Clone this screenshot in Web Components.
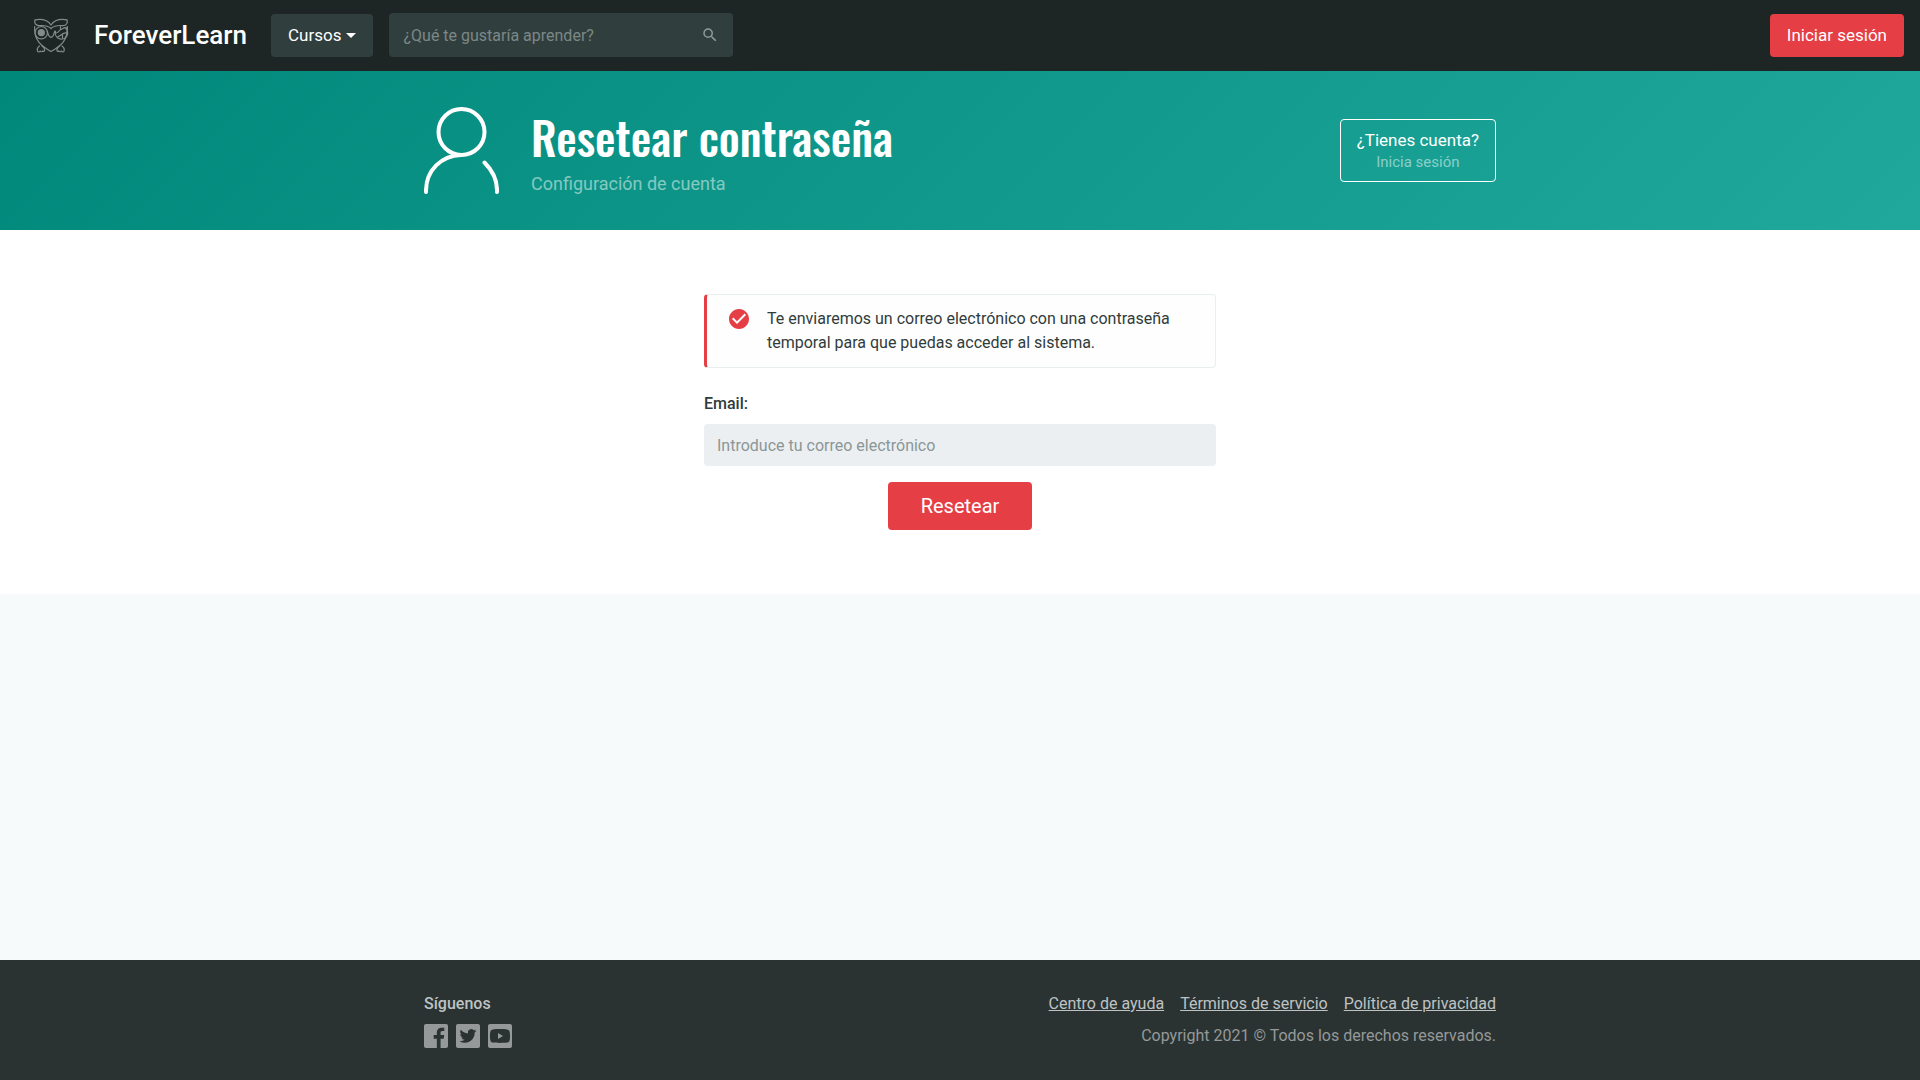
<!DOCTYPE html>
<html lang="es">
<head>
<meta charset="utf-8">
<meta name="viewport" content="width=device-width, initial-scale=1">
<title>ForeverLearn - Resetear contraseña</title>
<style>
  body { margin: 0; font: 16px/24px Roboto, "Liberation Sans", sans-serif; color: #303c3b; background: #f6fafb; }
</style>
</head>
<body>
<fl-page>
  <fl-header slot="header"></fl-header>
  <fl-hero>
    <span slot="title">Resetear contraseña</span>
    <span slot="subtitle">Configuración de cuenta</span>
  </fl-hero>
  <fl-reset-form>
    <fl-notice>Te enviaremos un correo electrónico con una contraseña temporal para que puedas acceder al sistema.</fl-notice>
  </fl-reset-form>
  <fl-footer slot="footer"></fl-footer>
</fl-page>
<script>
const define = (name, html) => customElements.define(name, class extends HTMLElement {
  constructor() {
    super();
    this.attachShadow({ mode: 'open' }).innerHTML =
      '<style>*{box-sizing:border-box}h1,p{margin:0}a{color:inherit;text-decoration:none}button,input{font:inherit;margin:0;border:0}svg{display:block;flex:none}</style>' + html;
  }
});

define('fl-page', `
<style>
  :host { display: flex; flex-direction: column; min-height: 100vh; }
  main { flex: 1; }
</style>
<slot name="header"></slot>
<main><slot></slot></main>
<slot name="footer"></slot>`);

define('fl-header', `
<style>
  :host { display: block; background: #1e2625; color: #fff; }
  header { display: flex; align-items: center; min-height: 71px; padding: 13px 16px 14px 32px; }
  .brand { display: flex; align-items: center; gap: 24px; margin-right: 24px; font-size: 26px; line-height: 32px; font-weight: 500; }
  .menu, .login { height: 43px; border-radius: 4px; font-size: 17px; line-height: 24px; color: #fff; }
  .menu { display: flex; align-items: center; gap: 5px; padding: 0 17px; margin-right: 16px; background: #303f3e; }
  .search { display: flex; align-items: center; width: 344px; height: 44px; padding-right: 14px; border-radius: 4px; background: #303f3e; }
  .search input { flex: 1; min-width: 0; height: 44px; padding: 0 14px; background: none; color: #fff; outline: 0; }
  .search input::placeholder { color: #7c8887; opacity: 1; }
  .search button { padding: 0; background: none; color: #8f9998; }
  .login { display: flex; align-items: center; margin-left: auto; padding: 0 17px; background: #e53e45; }
</style>
<header>
  <a class="brand" href="#">
    <svg width="38" height="38" viewBox="0 0 38 38" fill="none" stroke="#858a8a" stroke-width="1.2" stroke-linejoin="round" stroke-linecap="round" aria-hidden="true">
      <path d="M3 3.800C8 3 15 2.800 19 9 23 2.800 30 3 35 3.800 36 6.500 34.500 9.600 31 9.600 26 9.200 22 9.600 19 12.500 16 9.600 12 9.200 7 9.600 3.500 9.600 2 7 3 3.800Z"/>
      <circle cx="9.300" cy="16.700" r="6.200"/><circle cx="9.300" cy="16.700" r="3" fill="#858a8a"/>
      <path d="M15.200 15c1 4 2.400 6.300 3.800 6.300s2.800-2.300 3.800-6.300"/>
      <path d="M33 11.800a6.200 6.200 0 1 1-9.500 3.500M35 11v8c-.5 1.500-1.200 2.500-2.300 3.300M24 17c3 0 2.500-3 5-3.500s2.500-2.500 4.500-1.700M26 20.500c3 0 3.500-4 8.500-3.500M28.500 10.500v3M30.500 18v4"/>
      <path d="M2.600 10.500C2 25 9.500 30 19 35.600 28.500 30 36 25 35.400 10.500"/>
      <path d="M7.500 30c-1.700 1.300-2.600 3.700-1.900 5.300.8 1.100 2 .4 2.500-.3.600 1 2 1 2.600 0 .8.800 2.100.3 1.900-1.300-.3-1.800-1.500-3-2.600-3.700M30 30c1.700 1.300 2.600 3.700 1.900 5.300-.8 1.100-2 .4-2.500-.3-.6 1-2 1-2.600 0-.8.800-2.100.3-1.900-1.300.3-1.800 1.500-3 2.600-3.700"/>
    </svg>
    <span>ForeverLearn</span>
  </a>
  <button class="menu" type="button">Cursos
    <svg width="10" height="5" viewBox="0 0 10 5" aria-hidden="true"><path d="M0 0h10L5 5z" fill="currentColor"/></svg>
  </button>
  <form class="search" role="search">
    <input type="search" placeholder="¿Qué te gustaría aprender?" aria-label="Buscar cursos">
    <button type="button" aria-label="Buscar">
      <svg width="18" height="18" viewBox="0 0 24 24" fill="currentColor"><path d="M15.500 14h-.79l-.28-.27A6.471 6.471 0 0 0 16 9.500 6.500 6.500 0 1 0 9.500 16c1.610 0 3.090-.59 4.230-1.570l.27.280v.79l5 4.990L20.490 19l-4.990-5zm-6 0C7.010 14 5 11.990 5 9.500S7.010 5 9.500 5 14 7.010 14 9.500 11.990 14 9.500 14z"/></svg>
    </button>
  </form>
  <a class="login" href="#">Iniciar sesión</a>
</header>`);

define('fl-hero', `
<style>
  :host { display: block; color: #fff; background: linear-gradient(135deg, #00897b, #1fa89b); }
  .row { display: flex; align-items: center; gap: 32px; max-width: 1120px; min-height: 159px; margin: 0 auto; padding: 32px 24px; box-sizing: border-box; }
  .heading { display: flex; flex-direction: column; gap: 2px; }
  h1 { font: 500 46px/64px Oswald, "Roboto Condensed", sans-serif; }
  p { font-size: 18px; line-height: 28px; color: rgba(255,255,255,.5); }
  .account { margin-left: auto; padding: 8px 16px 9px; border: 1px solid #fff; border-radius: 4px; text-align: center; font-size: 17px; line-height: 24px; }
  small { display: block; font-size: 15px; line-height: 20px; color: rgba(255,255,255,.5); }
</style>
<div class="row">
  <svg width="75" height="88" viewBox="0 0 75 88" fill="none" stroke="#fff" stroke-width="4" stroke-linecap="round" aria-hidden="true">
    <circle cx="37.500" cy="25" r="23"/>
    <path d="M2 85C1.500 63 18 48.500 37 48M60.500 55.500c8 8 13 18 12.500 29.500"/>
  </svg>
  <div class="heading">
    <h1><slot name="title"></slot></h1>
    <p><slot name="subtitle"></slot></p>
  </div>
  <a class="account" href="#">¿Tienes cuenta?<small>Inicia sesión</small></a>
</div>`);

define('fl-notice', `
<style>
  :host { display: flex; gap: 16px; padding: 12px 24px 12px 20px; border: 1px solid #e9eff0; border-left: 3px solid #e53e45; border-radius: 4px; background: #fefefe; }
  svg { color: #e53e45; }
</style>
<svg width="24" height="24" viewBox="0 0 24 24" fill="currentColor" aria-hidden="true"><path d="M12 2C6.480 2 2 6.480 2 12s4.480 10 10 10 10-4.480 10-10S17.520 2 12 2zm-2 15l-5-5 1.410-1.410L10 14.170l7.590-7.590L19 8l-9 9z"/></svg>
<div><slot></slot></div>`);

define('fl-reset-form', `
<style>
  :host { display: block; padding: 64px 24px; background: #fff; }
  form { display: flex; flex-direction: column; max-width: 512px; margin: 0 auto; }
  label { margin: 24px 0 8px; font-weight: 500; }
  input { height: 42px; padding: 0 13px; border-radius: 4px; background: #ebeff2; color: inherit; }
  input::placeholder { color: #8b9696; opacity: 1; }
  button { align-self: center; margin-top: 16px; height: 48px; padding: 0 33px; border-radius: 4px; background: #e53e45; color: #fff; font-size: 20px; line-height: 24px; }
</style>
<form>
  <slot></slot>
  <label for="email">Email:</label>
  <input id="email" type="email" placeholder="Introduce tu correo electrónico">
  <button type="button">Resetear</button>
</form>`);

define('fl-footer', `
<style>
  :host { display: block; background: #2a3332; color: #bfc2c2; }
  footer { display: flex; justify-content: space-between; max-width: 1120px; margin: 0 auto; padding: 32px 24px; }
  footer > div { display: flex; flex-direction: column; gap: 8px; }
  .links { display: flex; justify-content: flex-end; gap: 16px; }
  .links a { text-decoration: underline; }
  .social { display: flex; gap: 8px; color: #959999; }
  .follow { font-weight: 500; }
  .copy { text-align: right; color: #959999; }
</style>
<footer>
  <div>
    <p class="follow">Síguenos</p>
    <nav class="social" aria-label="Redes sociales">
      <a href="#" aria-label="Facebook"><svg width="24" height="24" viewBox="0 0 24 24"><rect width="24" height="24" rx="2" fill="currentColor"/><path fill="#2a3332" d="M12.820 24v-9.290H9.690v-3.620h3.130V8.410c0-3.100 1.890-4.780 4.660-4.780 1.320 0 2.460.1 2.790.14v3.240h-1.910c-1.500 0-1.790.71-1.790 1.760v2.310h3.580l-.47 3.620h-3.110V24z"/></svg></a>
      <a href="#" aria-label="Twitter"><svg width="24" height="24" viewBox="0 0 24 24"><rect width="24" height="24" rx="2" fill="currentColor"/><path fill="#2a3332" transform="translate(3.600 3.600) scale(.7)" d="M24 4.560a9.830 9.830 0 0 1-2.830.77 4.930 4.930 0 0 0 2.170-2.720 9.860 9.860 0 0 1-3.130 1.190 4.920 4.920 0 0 0-8.390 4.490A13.980 13.980 0 0 1 1.670 3.150a4.930 4.930 0 0 0 1.520 6.570 4.900 4.900 0 0 1-2.230-.61v.06a4.930 4.930 0 0 0 3.950 4.830 4.940 4.940 0 0 1-2.220.08 4.930 4.930 0 0 0 4.600 3.420A9.900 9.900 0 0 1 0 19.540a13.940 13.940 0 0 0 7.550 2.210c9.140 0 14.300-7.720 13.990-14.640A10 10 0 0 0 24 4.560z"/></svg></a>
      <a href="#" aria-label="YouTube"><svg width="24" height="24" viewBox="0 0 24 24"><rect width="24" height="24" rx="2" fill="currentColor"/><path fill="#2a3332" d="M5 5.400c3-.5 11-.5 14 0 2.300.3 3 1.600 3 6.600s-.7 6.300-3 6.600c-3 .5-11 .5-14 0-2.300-.3-3-1.600-3-6.600s.7-6.300 3-6.600z"/><path fill="currentColor" d="M10 9v6l5-3z"/></svg></a>
    </nav>
  </div>
  <div>
    <nav class="links" aria-label="Enlaces"><a href="#">Centro de ayuda</a><a href="#">Términos de servicio</a><a href="#">Política de privacidad</a></nav>
    <p class="copy">Copyright 2021 © Todos los derechos reservados.</p>
  </div>
</footer>`);
</script>
</body>
</html>
